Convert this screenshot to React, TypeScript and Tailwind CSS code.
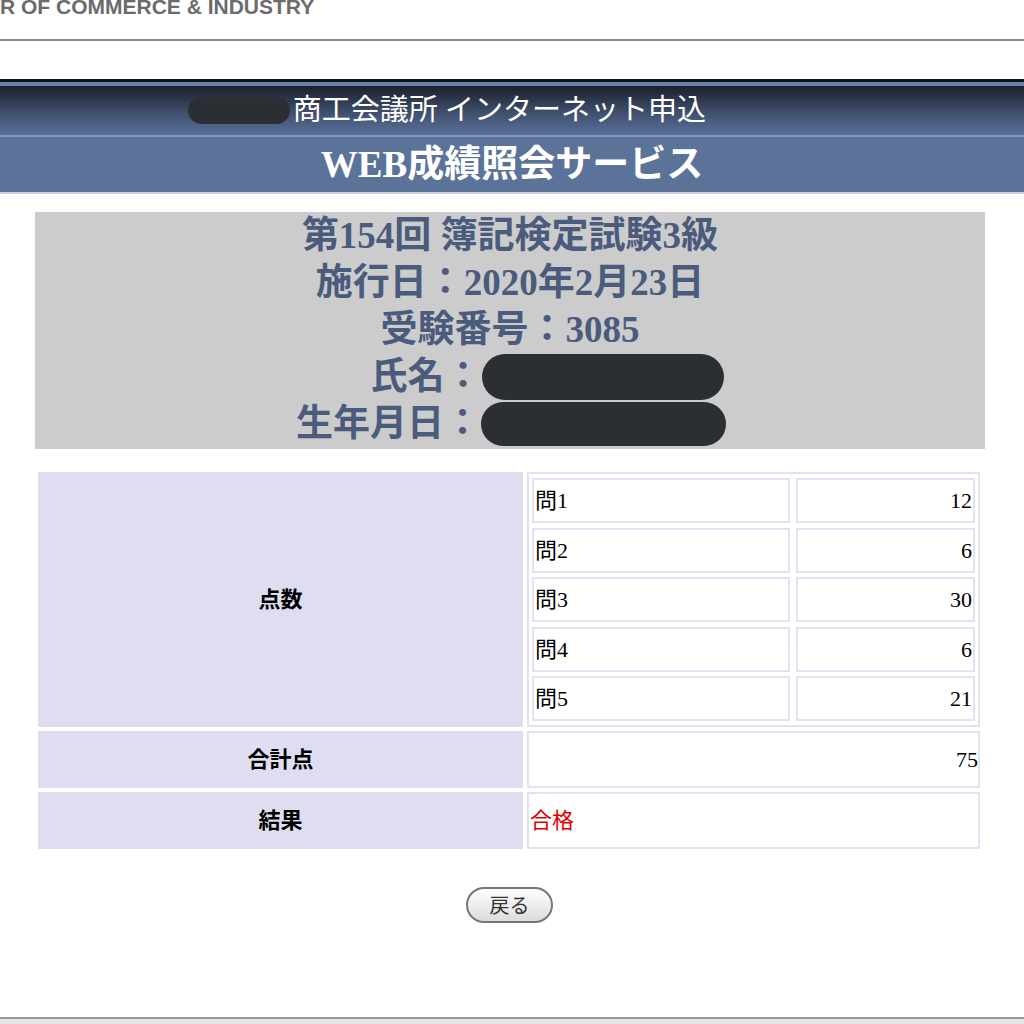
const serif = { fontFamily: '"Liberation Serif", "Noto Sans CJK JP", serif' };

const scores = [
  ['問1', '12'],
  ['問2', '6'],
  ['問3', '30'],
  ['問4', '6'],
  ['問5', '21'],
];

function Redacted({ w, h }: { w: string; h: string }) {
  return <span className={`inline-block rounded-full bg-[#2b2e33] ${w} ${h}`} />;
}

export default function App() {
  return (
    <div className="flex h-[1024px] w-[1024px] flex-col overflow-hidden bg-white" style={serif}>
      {/* site banner, cut off at the top */}
      <div className="h-[41px] border-b-2 border-[#8a8a8a] overflow-hidden">
        <div
          className="-mt-[4px] text-[21px] font-bold leading-none text-[#6b6b6b]"
          style={{ fontFamily: '"Liberation Sans", Arial, sans-serif' }}
        >
          R OF COMMERCE &amp; INDUSTRY
        </div>
      </div>

      <div className="h-[38px]" />

      {/* header bars */}
      <div className="h-[3px] bg-[#0e1119]" />
      <div className="h-[4px] bg-[#6b80a7]" />
      <div className="flex h-[49px] items-center justify-center bg-gradient-to-b from-[#1b202c] via-[#3d4c68] to-[#5a719a] pr-[130px]">
        <Redacted w="w-[102px]" h="h-[27px]" />
        <span className="ml-[3px] text-[29px] leading-none text-white">商工会議所 インターネット申込</span>
      </div>
      <div className="h-[2px] bg-[#8094bb]" />
      <div className="flex h-[55px] items-center justify-center bg-[#5b7399]">
        <span className="text-[37px] font-bold leading-none text-white">WEB成績照会サービス</span>
      </div>
      <div className="h-[2px] bg-[#c9d0e0]" />

      {/* exam info */}
      <div className="mx-[35px] mt-[18px] flex w-[950px] flex-col bg-[#cccccc] pb-[2px] text-[37px] font-bold leading-[47px] text-[#4a5b7c]">
        <div className="flex justify-center">第154回 簿記検定試験3級</div>
        <div className="flex justify-center">施行日：2020年2月23日</div>
        <div className="flex justify-center">受験番号：3085</div>
        <div className="flex items-center justify-center pl-[74px]">
          <span>氏名：</span>
          <Redacted w="w-[242px]" h="h-[46px]" />
        </div>
        <div className="flex items-center justify-center pl-[2px]">
          <span>生年月日：</span>
          <Redacted w="w-[245px]" h="h-[44px]" />
        </div>
      </div>

      {/* result table */}
      <div className="ml-[38px] mt-[23px] grid w-[942px] grid-cols-[485px_453px] gap-[4px] text-[22px] text-black">
        <div className="flex h-[255px] items-center justify-center bg-[#dfdef1] font-bold">点数</div>
        <div className="border-2 border-[#e3e2f2] px-[3px] py-[4px]">
          <div className="grid grid-cols-[258px_179px] gap-x-[6px] gap-y-[4.5px]">
            {scores.map(([q, v]) => (
              <div key={q} className="contents">
                <div className="flex h-[45px] items-center border-2 border-[#e3e2f2] pl-[1px]">{q}</div>
                <div className="flex h-[45px] items-center justify-end border-2 border-[#e3e2f2] pr-[1px]">{v}</div>
              </div>
            ))}
          </div>
        </div>

        <div className="flex h-[57px] items-center justify-center bg-[#dfdef1] font-bold">合計点</div>
        <div className="flex h-[57px] items-center justify-end border-2 border-[#e3e2f2]">75</div>

        <div className="flex h-[57px] items-center justify-center bg-[#dfdef1] font-bold">結果</div>
        <div className="flex h-[57px] items-center border-2 border-[#e3e2f2] pl-[1px] text-[#e00000]">合格</div>
      </div>

      {/* back button */}
      <div className="mt-[38px] flex justify-center pr-[5px]">
        <button
          className="flex h-[36px] w-[87px] items-center justify-center rounded-full border-2 border-[#777] bg-gradient-to-b from-white to-[#dcdcdc] text-[20px] leading-none text-[#333]"
          style={{ fontFamily: '"Noto Sans CJK JP", sans-serif' }}
        >
          戻る
        </button>
      </div>

      <div className="flex-1" />
      <div className="h-[2px] bg-[#9a9a9a]" />
      <div className="h-[5px] bg-[#e6e6e6]" />
    </div>
  );
}
